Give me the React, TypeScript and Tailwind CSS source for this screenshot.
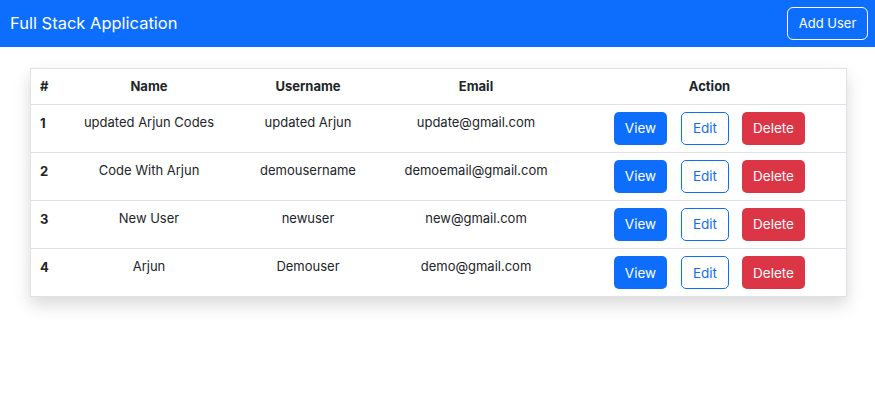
import React from "react";

const users = [
  { id: 1, name: "updated Arjun Codes", username: "updated Arjun", email: "update@gmail.com" },
  { id: 2, name: "Code With Arjun", username: "demousername", email: "demoemail@gmail.com" },
  { id: 3, name: "New User", username: "newuser", email: "new@gmail.com" },
  { id: 4, name: "Arjun", username: "Demouser", email: "demo@gmail.com" },
];

export default function App() {
  return (
    <div className="min-h-[396px] bg-white text-[#212529]" style={{ fontFamily: "Inter, 'Noto Sans', sans-serif" }}>
      <nav className="h-[47px] bg-[#0d6efd] flex items-center justify-between pl-[10px] pr-[7px]">
        <span className="text-white text-[16.5px] leading-none">Full Stack Application</span>
        <button className="h-[33px] w-[81px] rounded-[6px] border border-white text-white text-[13px]">Add User</button>
      </nav>
      <div className="pt-[21px] pl-[30px] pr-[28px]">
        <div className="border border-[#dee2e6] shadow-[0_8px_16px_rgba(0,0,0,0.15)]">
          <table className="w-full table-fixed border-collapse text-[13px]">
            <colgroup>
              <col className="w-[30px]" />
              <col className="w-[176px]" />
              <col className="w-[142px]" />
              <col className="w-[194px]" />
              <col />
            </colgroup>
            <thead>
              <tr className="h-[35px] border-b border-[#dee2e6]">
                <th className="text-left pl-[9px] font-bold">#</th>
                <th className="font-bold">Name</th>
                <th className="font-bold">Username</th>
                <th className="font-bold">Email</th>
                <th className="font-bold">Action</th>
              </tr>
            </thead>
            <tbody>
              {users.map((u, i) => (
                <tr key={u.id} className={i < users.length - 1 ? "border-b border-[#dee2e6]" : ""}>
                  <td className="align-top pl-[9px] pt-[6px] font-bold leading-[24px]">{u.id}</td>
                  <td className="align-top text-center pt-[5px] leading-[24px]">{u.name}</td>
                  <td className="align-top text-center pt-[5px] leading-[24px]">{u.username}</td>
                  <td className="align-top text-center pt-[5px] leading-[24px]">{u.email}</td>
                  <td className="align-top py-[7.1px]">
                    <div className="flex justify-center gap-[14px]">
                      <button className="h-[33px] w-[53px] rounded-[5px] bg-[#0d6efd] text-white text-[13.5px]">View</button>
                      <button className="h-[33px] w-[48px] rounded-[5px] border border-[#0d6efd] text-[#0d6efd] text-[13.5px]">Edit</button>
                      <button className="h-[33px] w-[63px] -ml-[1px] rounded-[5px] bg-[#dc3545] text-white text-[13.5px]">Delete</button>
                    </div>
                  </td>
                </tr>
              ))}
            </tbody>
          </table>
        </div>
      </div>
    </div>
  );
}
